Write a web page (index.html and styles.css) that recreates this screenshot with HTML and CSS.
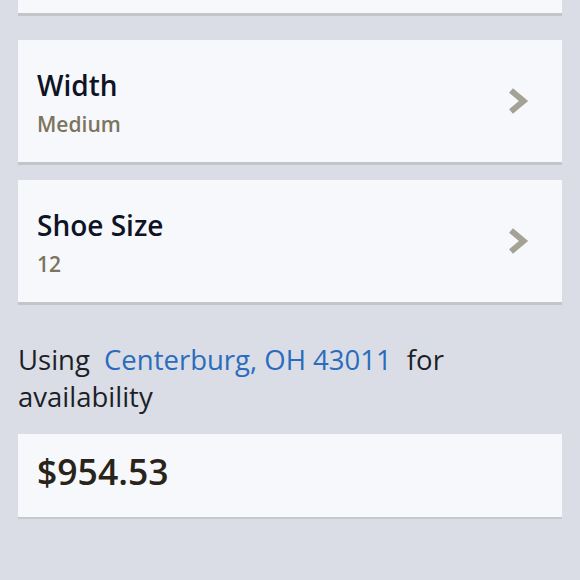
FILE: index.html
```html
<!DOCTYPE html>
<html>
<head>
<meta charset="utf-8">
<link rel="stylesheet" href="styles.css">
</head>
<body>
<div class="page">
  <div class="card top-card"></div>
  <div class="card option">
    <div class="option-text">
      <div class="option-title">Width</div>
      <div class="option-value">Medium</div>
    </div>
    <svg class="chev" width="22" height="28" viewBox="0 0 22 28"><path d="M4 3.5 L16.5 14 L4 24.5" fill="none" stroke="#a3a294" stroke-width="6"/></svg>
  </div>
  <div class="card option">
    <div class="option-text">
      <div class="option-title">Shoe Size</div>
      <div class="option-value">12</div>
    </div>
    <svg class="chev" width="22" height="28" viewBox="0 0 22 28"><path d="M4 3.5 L16.5 14 L4 24.5" fill="none" stroke="#a3a294" stroke-width="6"/></svg>
  </div>
  <p class="avail">Using <span class="loc">Centerburg, OH 43011</span> for availability</p>
  <div class="card price-card">
    <div class="price">$954.53</div>
  </div>
</div>
</body>
</html>
```
FILE: styles.css
```css
html, body {
  margin: 0;
  padding: 0;
  background: #dadde6;
}
body {
  font-family: "Open Sans", "Noto Sans", sans-serif;
  width: 580px;
  height: 580px;
  overflow: hidden;
}
.page {
  padding: 0 18px;
  display: flex;
  flex-direction: column;
}
.card {
  background: #f7f8fb;
  box-shadow: 0 3px 0 #c3c5c9;
}
.top-card {
  height: 13px;
  margin-bottom: 27px;
}
.option {
  height: 122px;
  box-sizing: border-box;
  display: flex;
  align-items: center;
  justify-content: space-between;
  padding: 0 33px 0 19px;
  margin-bottom: 18px;
}
.option-text {
  display: flex;
  flex-direction: column;
  margin-top: 3px;
}
.option-title {
  font-size: 28px;
  font-weight: 600;
  color: #0e1326;
  line-height: 38px;
}
.option-value {
  font-size: 21px;
  font-weight: 600;
  color: #7c745f;
  line-height: 30px;
  margin-top: 5px;
}
.chev {
  display: block;
}
.avail {
  margin: 21px 0 0;
  font-size: 27.5px;
  line-height: 37px;
  color: #1d1f26;
  padding-right: 100px;
}
.loc {
  color: #2a6cbd;
  margin: 0 8px 0 7px;
}
.price-card {
  margin-top: 19px;
  height: 83px;
  box-sizing: border-box;
  display: flex;
  align-items: center;
  padding: 0 0 10px 19px;
  box-shadow: 0 2px 0 #c6c8cc;
}
.price {
  font-size: 35.5px;
  font-weight: 600;
  color: #29241a;
}
```
